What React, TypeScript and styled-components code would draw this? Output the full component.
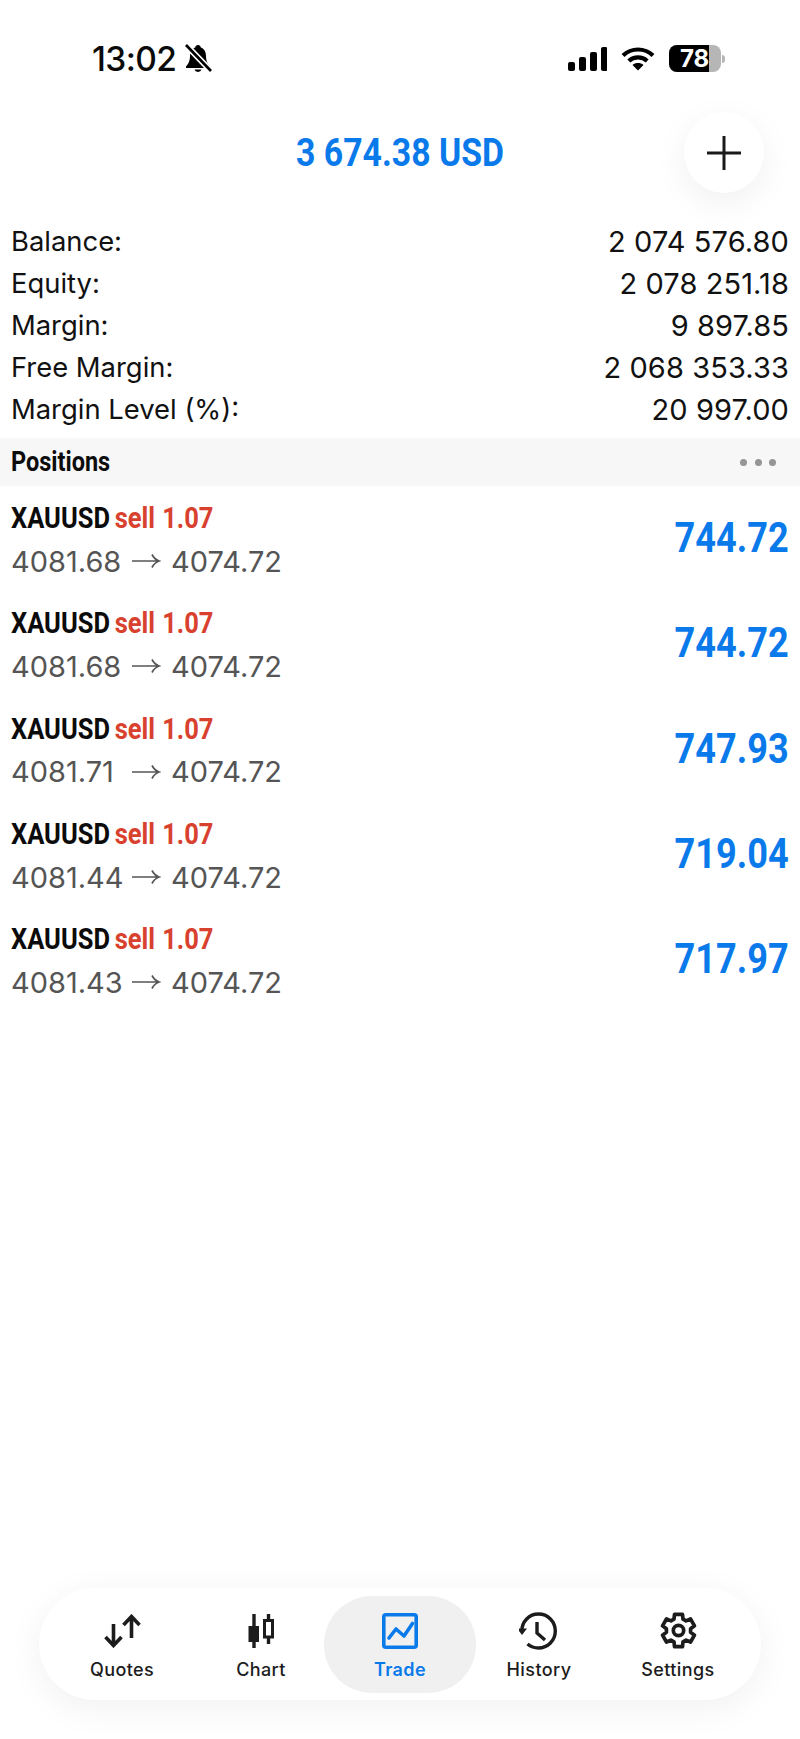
import styled, { createGlobalStyle } from "styled-components";

const GlobalStyle = createGlobalStyle`
  html, body {
    margin: 0;
    padding: 0;
    background: #fff;
  }
  * {
    box-sizing: border-box;
  }
`;

const narrow = `"Roboto", "Liberation Sans", sans-serif`;
const regular = `"Inter", "Liberation Sans", sans-serif`;

const Page = styled.div`
  display: flex;
  flex-direction: column;
  width: 800px;
  height: 1739px;
  overflow: hidden;
  background: #fff;
  font-family: ${regular};
`;

const StatusBar = styled.div`
  display: flex;
  justify-content: space-between;
  align-items: center;
  height: 112px;
  padding: 6px 75px 0 92px;
  flex-shrink: 0;
`;

const StatusGroup = styled.div<{ $gap: number }>`
  display: flex;
  align-items: center;
  gap: ${(p) => p.$gap}px;
  height: 30px;
  margin-top: -1px;
`;

const Clock = styled.span`
  font-size: 33.5px;
  font-weight: 500;
  letter-spacing: -0.6px;
  color: #0b0b0b;
`;

const Battery = styled.div`
  position: relative;
  display: flex;
  width: 52px;
  height: 27px;
  border-radius: 8px;
  overflow: hidden;
  background: #b6b6b6;
`;

const BatteryFill = styled.div`
  width: 40px;
  background: #000;
`;

const BatteryLabel = styled.span`
  position: absolute;
  top: 0;
  left: 11px;
  font-size: 24px;
  font-weight: 700;
  line-height: 27px;
  color: #fff;
`;

const BatteryNub = styled.div`
  width: 3px;
  height: 8px;
  margin-left: -13px;
  border-radius: 0 3px 3px 0;
  background: #b6b6b6;
`;

const Header = styled.div`
  display: grid;
  grid-template-columns: 1fr auto 1fr;
  align-items: center;
  height: 108px;
  padding-bottom: 27px;
  flex-shrink: 0;
`;

const Total = styled.div`
  grid-column: 2;
  font-family: ${narrow};
  font-size: 39px;
  font-weight: 700;
  color: #0a7aeb;
  transform: scaleX(0.866);
`;

const AddButton = styled.div`
  grid-column: 3;
  justify-self: end;
  display: flex;
  align-items: center;
  justify-content: center;
  width: 80px;
  height: 81px;
  margin-right: 36px;
  border-radius: 50%;
  background: #fff;
  box-shadow: 0 10px 34px rgba(0, 0, 0, 0.06);
`;

const Summary = styled.div`
  display: flex;
  flex-direction: column;
  margin-bottom: 8px;
`;

const SummaryRow = styled.div`
  display: flex;
  justify-content: space-between;
  align-items: center;
  height: 42px;
  padding: 0 11px;
  font-size: 27.4px;
  color: #111;
`;

const SummaryValue = styled.span`
  font-size: 29px;
  letter-spacing: 0.1px;
`;

const SectionBar = styled.div`
  display: flex;
  justify-content: space-between;
  align-items: center;
  height: 48px;
  padding: 0 11px;
  background: #f7f7f7;
`;

const SectionTitle = styled.span`
  font-family: ${narrow};
  font-size: 27px;
  font-weight: 700;
  color: #0c0c0c;
  transform: scaleX(0.87);
  transform-origin: left center;
`;

const Dots = styled.div`
  display: flex;
  gap: 7.5px;
  margin-right: 13px;
`;

const Dot = styled.span`
  width: 7px;
  height: 7px;
  border-radius: 50%;
  background: #959595;
`;

const PositionRow = styled.div`
  display: flex;
  justify-content: space-between;
  align-items: center;
  height: 105.33px;
  padding: 0 11px;
`;

const PositionInfo = styled.div`
  display: flex;
  flex-direction: column;
  padding-top: 9px;
`;

const PositionTitle = styled.div`
  font-family: ${narrow};
  font-size: 30px;
  font-weight: 700;
  line-height: 36px;
  word-spacing: -2px;
  color: #0b0b0b;
  transform: scaleX(0.85);
  transform-origin: left center;
`;

const SellTag = styled.span`
  word-spacing: 1px;
  color: #d9412f;
`;

const Prices = styled.div`
  display: flex;
  align-items: center;
  gap: 10px;
  height: 50px;
  font-size: 29px;
  color: #555;
`;

const OpenPrice = styled.span`
  width: 110px;
`;

const Profit = styled.div`
  font-family: ${narrow};
  font-size: 42px;
  font-weight: 700;
  color: #0a7aeb;
  margin-top: -2px;
  transform: scaleX(0.86);
  transform-origin: right center;
`;

const NavWrap = styled.div`
  margin-top: auto;
  padding: 0 39px 39px;
`;

const Nav = styled.nav`
  display: flex;
  justify-content: center;
  align-items: center;
  height: 112px;
  border-radius: 56px;
  background: #fff;
  box-shadow: 0 8px 36px rgba(0, 0, 0, 0.06);
`;

const NavItem = styled.div<{ $active?: boolean }>`
  display: flex;
  flex-direction: column;
  align-items: center;
  justify-content: center;
  gap: 10px;
  width: ${(p) => (p.$active ? 152 : 139)}px;
  height: 97px;
  margin: ${(p) => (p.$active ? "0 -6.5px" : "0")};
  padding-top: 5px;
  border-radius: 48px;
  background: ${(p) => (p.$active ? "#f0f0f0" : "transparent")};
  color: ${(p) => (p.$active ? "#0a7aeb" : "#1c1c1c")};
`;

const NavLabel = styled.span<{ $active?: boolean }>`
  font-size: 18px;
  font-weight: ${(p) => (p.$active ? 600 : 450)};
  letter-spacing: 0.4px;
  line-height: 22px;
`;

const IconSlot = styled.div`
  display: flex;
  align-items: center;
  justify-content: center;
  height: 37px;
`;

const gearPath = () => {
  const cx = 20;
  const cy = 20;
  const outer = 18;
  const inner = 13.2;
  const pts: string[] = [];
  for (let i = 0; i < 6; i++) {
    const a = ((-90 + i * 60) * Math.PI) / 180;
    const toothHalf = 0.24;
    const rootHalf = 0.38;
    const add = (r: number, d: number) =>
      pts.push(`${(cx + r * Math.cos(a + d)).toFixed(2)} ${(cy + r * Math.sin(a + d)).toFixed(2)}`);
    add(inner, -rootHalf);
    add(outer, -toothHalf);
    add(outer, toothHalf);
    add(inner, rootHalf);
  }
  return `M${pts.join("L")}Z`;
};

const BellOff = () => (
  <svg width="28" height="29" viewBox="0 0 28 29">
    <path d="M14 1c-1.6 0-2.6 1-2.8 2.4C7.6 4.6 6 8 6 12c0 4-.8 7-4 10.5V24h24v-1.5c-3.2-3.5-4-6.500-4-10.500 0-4-1.600-7.400-5.200-8.600C16.600 2 15.600 1 14 1z" fill="#000" />
    <path d="M10.500 25.500a3.600 3.200 0 0 0 7 0z" fill="#000" />
    <path d="M2 1l25 26" stroke="#fff" strokeWidth="6" />
    <path d="M2 1l25 26" stroke="#000" strokeWidth="2.600" />
  </svg>
);

const Signal = () => (
  <svg width="39" height="24" viewBox="0 0 39 24" fill="#000">
    <rect x="0" y="15" width="7" height="9" rx="2" />
    <rect x="11" y="10" width="7" height="14" rx="2" />
    <rect x="22" y="5" width="7" height="19" rx="2" />
    <rect x="33" y="0" width="6.500" height="24" rx="2" />
  </svg>
);

const Wifi = () => (
  <svg width="34" height="25" viewBox="0 0 34 25" fill="none" stroke="#000" strokeWidth="4.200">
    <path d="M2 9.500c8.400-8 21.600-8 30 0" />
    <path d="M7.800 15c5.200-4.800 13.200-4.800 18.400 0" />
    <path d="M17 24.500l-5.500-5.600c3.200-2.600 7.800-2.600 11 0z" fill="#000" stroke="none" />
  </svg>
);

const Plus = () => (
  <svg width="34" height="34" viewBox="0 0 34 34" stroke="#1a1a1a" strokeWidth="3">
    <path d="M17 0v34M0 17h34" />
  </svg>
);

const Arrow = () => (
  <svg width="30" height="18" viewBox="0 0 30 18" fill="none" stroke="#555" strokeWidth="1.700">
    <path d="M1 9h27M21 2.500c1.500 3 3.800 5.300 7 6.500-3.200 1.200-5.500 3.500-7 6.500" />
  </svg>
);

const QuotesIcon = () => (
  <svg width="37" height="34" viewBox="0 0 37 34" fill="none" stroke="currentColor" strokeWidth="3.600">
    <path d="M9.500 10v21M1.500 23l8 8.500 8-8.500" />
    <path d="M27.500 24V3M19.500 11l8-8.500 8 8.500" />
  </svg>
);

const ChartIcon = () => (
  <svg width="26" height="34" viewBox="0 0 26 34" fill="none" stroke="currentColor" strokeWidth="3.400">
    <path d="M6 0v34" />
    <rect x="0.500" y="12" width="10.500" height="16" fill="currentColor" stroke="none" />
    <path d="M20.500 0v30" />
    <rect x="16.500" y="6.500" width="8" height="16.500" fill="#fff" strokeWidth="3" />
  </svg>
);

const TradeIcon = () => (
  <svg width="36" height="36" viewBox="0 0 36 36" fill="none" stroke="currentColor" strokeWidth="3.600" strokeLinecap="round">
    <rect x="1.800" y="1.800" width="32.400" height="32.400" rx="2" />
    <path d="M7 25l7-9 8 7 8.500-12.500" strokeLinejoin="round" />
  </svg>
);

const HistoryIcon = () => (
  <svg width="40" height="38" viewBox="2 0 40 38" fill="none" stroke="currentColor" strokeWidth="3.400">
    <path d="M4.800 19C4.800 9.500 12.200 2 21.500 2c9.300 0 16.800 7.600 16.800 17s-7.500 17-16.800 17c-4.300 0-8-1.500-11-4" />
    <path d="M0 16.500h10l-5 6.500z" fill="currentColor" stroke="none" />
    <path d="M20 10v11l8 7" />
  </svg>
);

const SettingsIcon = () => (
  <svg width="37" height="37" viewBox="0 0 40 40" fill="none" stroke="currentColor" strokeWidth="4" strokeLinejoin="round">
    <path d={gearPath()} />
    <circle cx="20" cy="20" r="5.600" />
  </svg>
);

const summary = [
  ["Balance:", "2 074 576.80"],
  ["Equity:", "2 078 251.18"],
  ["Margin:", "9 897.85"],
  ["Free Margin:", "2 068 353.33"],
  ["Margin Level (%):", "20 997.00"],
];

const positions = [
  ["4081.68", "744.72"],
  ["4081.68", "744.72"],
  ["4081.71", "747.93"],
  ["4081.44", "719.04"],
  ["4081.43", "717.97"],
];

const tabs = [
  { label: "Quotes", icon: <QuotesIcon /> },
  { label: "Chart", icon: <ChartIcon /> },
  { label: "Trade", icon: <TradeIcon />, active: true },
  { label: "History", icon: <HistoryIcon /> },
  { label: "Settings", icon: <SettingsIcon /> },
];

const App = () => {
  return (
    <>
      <GlobalStyle />
      <Page>
        <StatusBar>
          <StatusGroup $gap={8}>
            <Clock>13:02</Clock>
            <BellOff />
          </StatusGroup>
          <StatusGroup $gap={14}>
            <Signal />
            <Wifi />
            <Battery>
              <BatteryFill />
              <BatteryLabel>78</BatteryLabel>
            </Battery>
            <BatteryNub />
          </StatusGroup>
        </StatusBar>
        <Header>
          <Total>3 674.38 USD</Total>
          <AddButton>
            <Plus />
          </AddButton>
        </Header>
        <Summary>
          {summary.map(([label, value]) => (
            <SummaryRow key={label}>
              <span>{label}</span>
              <SummaryValue>{value}</SummaryValue>
            </SummaryRow>
          ))}
        </Summary>
        <SectionBar>
          <SectionTitle>Positions</SectionTitle>
          <Dots>
            <Dot />
            <Dot />
            <Dot />
          </Dots>
        </SectionBar>
        {positions.map(([open, profit], i) => (
          <PositionRow key={i}>
            <PositionInfo>
              <PositionTitle>
                XAUUSD <SellTag>sell 1.07</SellTag>
              </PositionTitle>
              <Prices>
                <OpenPrice>{open}</OpenPrice>
                <Arrow />
                <span>4074.72</span>
              </Prices>
            </PositionInfo>
            <Profit>{profit}</Profit>
          </PositionRow>
        ))}
        <NavWrap>
          <Nav>
            {tabs.map((tab) => (
              <NavItem key={tab.label} $active={tab.active}>
                <IconSlot>{tab.icon}</IconSlot>
                <NavLabel $active={tab.active}>{tab.label}</NavLabel>
              </NavItem>
            ))}
          </Nav>
        </NavWrap>
      </Page>
    </>
  );
};

export default App;
